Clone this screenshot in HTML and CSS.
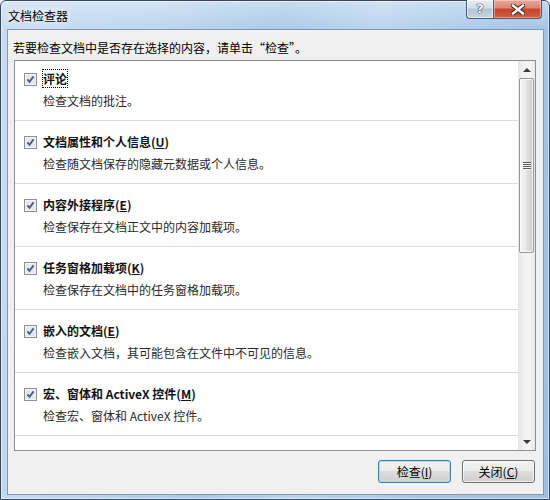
FILE: index.html
```html
<!DOCTYPE html>
<html lang="zh-CN">
<head>
<meta charset="utf-8">
<title>文档检查器</title>
<link rel="stylesheet" href="styles.css">
</head>
<body>
<div class="window">
  <div class="titlebar">
    <span class="title">文档检查器</span>
    <div class="caption">
      <div class="cap cap-help"><span class="q">?</span></div>
      <div class="cap cap-close">
        <svg width="14" height="11" viewBox="0 0 14 11">
          <path d="M2 1.5 L12 9.5 M12 1.5 L2 9.5" stroke="#3a2a26" stroke-width="4.4" stroke-linecap="square" fill="none"/>
          <path d="M2 1.5 L12 9.5 M12 1.5 L2 9.5" stroke="#ffffff" stroke-width="2.4" stroke-linecap="square" fill="none"/>
        </svg>
      </div>
    </div>
  </div>
  <div class="client">
    <p class="intro">若要检查文档中是否存在选择的内容，请单击“检查”。</p>
    <div class="list">
      <div class="items">
        <div class="item first">
          <svg class="cb" width="13" height="13" viewBox="0 0 13 13"><rect x="0.5" y="0.5" width="12" height="12" fill="#f4f4f4" stroke="#8e8f8f"/><rect x="2" y="2" width="9" height="9" fill="#e6e7e8"/><path d="M3.4 6.4 L5.5 8.8 L9.6 3.4" stroke="#4b5d96" stroke-width="1.9" fill="none"/></svg>
          <span class="name"><span class="focus">评论</span></span>
          <span class="desc">检查文档的批注。</span>
        </div>
        <div class="item">
          <svg class="cb" width="13" height="13" viewBox="0 0 13 13"><rect x="0.5" y="0.5" width="12" height="12" fill="#f4f4f4" stroke="#8e8f8f"/><rect x="2" y="2" width="9" height="9" fill="#e6e7e8"/><path d="M3.4 6.4 L5.5 8.8 L9.6 3.4" stroke="#4b5d96" stroke-width="1.9" fill="none"/></svg>
          <span class="name">文档属性和个人信息(<span class="ak">U</span>)</span>
          <span class="desc">检查随文档保存的隐藏元数据或个人信息。</span>
        </div>
        <div class="item">
          <svg class="cb" width="13" height="13" viewBox="0 0 13 13"><rect x="0.5" y="0.5" width="12" height="12" fill="#f4f4f4" stroke="#8e8f8f"/><rect x="2" y="2" width="9" height="9" fill="#e6e7e8"/><path d="M3.4 6.4 L5.5 8.8 L9.6 3.4" stroke="#4b5d96" stroke-width="1.9" fill="none"/></svg>
          <span class="name">内容外接程序(<span class="ak">E</span>)</span>
          <span class="desc">检查保存在文档正文中的内容加载项。</span>
        </div>
        <div class="item">
          <svg class="cb" width="13" height="13" viewBox="0 0 13 13"><rect x="0.5" y="0.5" width="12" height="12" fill="#f4f4f4" stroke="#8e8f8f"/><rect x="2" y="2" width="9" height="9" fill="#e6e7e8"/><path d="M3.4 6.4 L5.5 8.8 L9.6 3.4" stroke="#4b5d96" stroke-width="1.9" fill="none"/></svg>
          <span class="name">任务窗格加载项(<span class="ak">K</span>)</span>
          <span class="desc">检查保存在文档中的任务窗格加载项。</span>
        </div>
        <div class="item">
          <svg class="cb" width="13" height="13" viewBox="0 0 13 13"><rect x="0.5" y="0.5" width="12" height="12" fill="#f4f4f4" stroke="#8e8f8f"/><rect x="2" y="2" width="9" height="9" fill="#e6e7e8"/><path d="M3.4 6.4 L5.5 8.8 L9.6 3.4" stroke="#4b5d96" stroke-width="1.9" fill="none"/></svg>
          <span class="name">嵌入的文档(<span class="ak">E</span>)</span>
          <span class="desc">检查嵌入文档，其可能包含在文件中不可见的信息。</span>
        </div>
        <div class="item">
          <svg class="cb" width="13" height="13" viewBox="0 0 13 13"><rect x="0.5" y="0.5" width="12" height="12" fill="#f4f4f4" stroke="#8e8f8f"/><rect x="2" y="2" width="9" height="9" fill="#e6e7e8"/><path d="M3.4 6.4 L5.5 8.8 L9.6 3.4" stroke="#4b5d96" stroke-width="1.9" fill="none"/></svg>
          <span class="name">宏、窗体和 ActiveX 控件(<span class="ak">M</span>)</span>
          <span class="desc">检查宏、窗体和 ActiveX 控件。</span>
        </div>
      </div>
      <div class="scrollbar">
        <div class="sb-btn sb-up"><span class="arrow up"></span></div>
        <div class="sb-thumb"><span class="grip"></span></div>
        <div class="sb-track"></div>
        <div class="sb-btn sb-down"><span class="arrow down"></span></div>
      </div>
    </div>
    <div class="buttons">
      <div class="btn default">检查(<span class="ak">I</span>)</div>
      <div class="btn">关闭(<span class="ak">C</span>)</div>
    </div>
  </div>
</div>
</body>
</html>
```
FILE: styles.css
```css
html, body {
  margin: 0;
  padding: 0;
}
body {
  width: 550px;
  height: 500px;
  overflow: hidden;
  background: #ffffff;
  font-family: "Noto Sans CJK SC", "Microsoft YaHei", sans-serif;
  font-size: 12px;
  color: #000;
}
.window {
  position: relative;
  box-sizing: border-box;
  width: 550px;
  height: 500px;
  border: 1px solid #34495f;
  border-radius: 6px 6px 0 0;
  padding: 0 5px 4px 6px;
  display: flex;
  flex-direction: column;
  background:
    linear-gradient(180deg, rgba(255,255,255,0.35) 0, rgba(255,255,255,0) 30px),
    linear-gradient(100deg, #c6dcf2 0%, #bcd5ee 25%, #aac8e8 45%, #b9d3ee 60%, #a7c6e7 80%, #9dbfe4 100%);
  box-shadow: inset 0 0 0 1px rgba(255,255,255,0.55);
}
.titlebar {
  height: 28px;
  flex: none;
  display: flex;
  align-items: center;
  padding-left: 1px;
  padding-top: 2px;
  box-sizing: border-box;
}
.title {
  font-size: 12px;
  line-height: 16px;
  color: #000;
  text-shadow: 0 0 6px rgba(255,255,255,0.95), 0 0 10px rgba(255,255,255,0.8);
}
.caption {
  position: absolute;
  top: -1px;
  right: 7px;
  display: flex;
}
.cap {
  box-sizing: border-box;
  height: 19px;
  border: 1px solid #4a5a6e;
  border-top: none;
  display: flex;
  align-items: center;
  justify-content: center;
}
.cap-help {
  width: 27px;
  border-right: none;
  border-radius: 0 0 0 4px;
  background: linear-gradient(180deg, #e6edf4 0%, #d5dee8 45%, #b5c4d5 50%, #c6d4e2 100%);
  box-shadow: inset 0 0 0 1px rgba(255,255,255,0.6);
}
.q {
  font-family: "DejaVu Sans", sans-serif;
  font-weight: bold;
  font-size: 13px;
  line-height: 14px;
  color: #f6f8fa;
  text-shadow: 0 0 1px #2a3644, 0 0 1px #2a3644, 0 0 1px #2a3644;
}
.cap-close {
  width: 49px;
  border-radius: 0 0 4px 0;
  background: linear-gradient(180deg, #e8aa9c 0%, #da8572 45%, #c4462c 50%, #d25d3f 100%);
  box-shadow: inset 0 0 0 1px rgba(255,220,210,0.5);
}
.client {
  flex: 1;
  box-sizing: border-box;
  border: 1px solid #8598ae;
  background: #f0f0f0;
  display: flex;
  flex-direction: column;
}
.intro {
  margin: 10px 0 4px 5px;
  line-height: 16px;
  height: 16px;
  white-space: nowrap;
}
.list {
  box-sizing: border-box;
  height: 391px;
  margin: 0 7px 0 6px;
  border: 1px solid #8e8f8f;
  background: #ffffff;
  display: flex;
  overflow: hidden;
}
.items {
  flex: 1;
  overflow: hidden;
}
.item {
  display: grid;
  grid-template-columns: 13px 1fr;
  column-gap: 6px;
  row-gap: 6px;
  align-items: center;
  padding: 13px 0 11px 9px;
  border-bottom: 1px solid #dcdcdc;
}
.item.first {
  padding-top: 10px;
}
.cb {
  display: block;
}
.name {
  font-weight: bold;
  line-height: 16px;
  color: #111;
  white-space: nowrap;
}
.focus {
  outline: 1px dotted #000;
}
.desc {
  grid-column: 2;
  line-height: 16px;
  color: #2a2a2a;
  white-space: nowrap;
}
.ak {
  text-decoration: underline;
}
.scrollbar {
  width: 17px;
  flex: none;
  display: flex;
  flex-direction: column;
  background: linear-gradient(90deg, #e4e4e4 0%, #f2f2f2 30%, #f4f4f4 70%, #e8e8e8 100%);
}
.sb-btn {
  height: 17px;
  flex: none;
  display: flex;
  align-items: center;
  justify-content: center;
}
.arrow {
  width: 0;
  height: 0;
  border-left: 4px solid transparent;
  border-right: 4px solid transparent;
}
.arrow.up {
  border-bottom: 4px solid #3a3a3a;
}
.arrow.down {
  border-top: 4px solid #3a3a3a;
}
.sb-thumb {
  box-sizing: border-box;
  height: 175px;
  margin: 0 1px;
  border: 1px solid #979797;
  border-radius: 2px;
  background: linear-gradient(90deg, #f4f4f4 0%, #ececec 40%, #dcdcdc 60%, #cfcfcf 100%);
  box-shadow: inset 0 0 0 1px rgba(255,255,255,0.75);
  display: flex;
  align-items: center;
  justify-content: center;
}
.grip {
  width: 8px;
  height: 8px;
  background: repeating-linear-gradient(180deg, #5d5d5d 0, #5d5d5d 1px, #f4f4f4 1px, #f4f4f4 2px);
}
.sb-track {
  flex: 1;
}
.buttons {
  display: flex;
  justify-content: flex-end;
  gap: 11px;
  margin: 9px 8px 0 0;
}
.btn {
  box-sizing: border-box;
  width: 73px;
  height: 23px;
  border: 1px solid #707070;
  border-radius: 3px;
  background: linear-gradient(180deg, #f2f2f2 0%, #ebebeb 49%, #dddddd 50%, #cfcfcf 100%);
  box-shadow: inset 0 0 0 1px rgba(255,255,255,0.7);
  display: flex;
  align-items: center;
  justify-content: center;
  line-height: 16px;
  color: #000;
}
.btn.default {
  border-color: #3c7fb1;
  box-shadow: inset 0 0 0 1px #a8dcf6;
}
```
